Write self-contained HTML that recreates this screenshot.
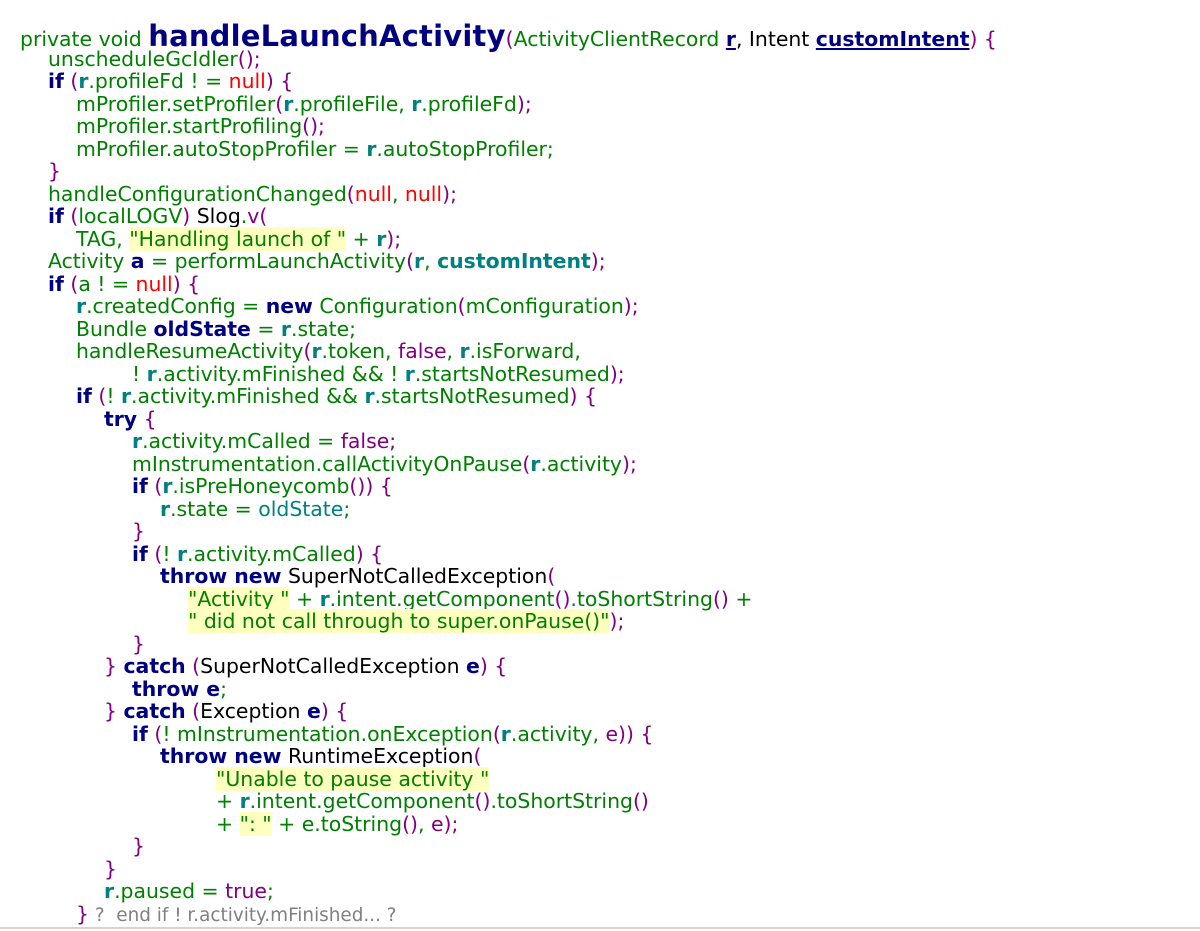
<!DOCTYPE html>
<html><head><meta charset="utf-8"><style>
body{margin:0;background:#fff;width:1200px;height:931px;overflow:hidden;position:relative;font-family:"DejaVu Sans","Liberation Sans",sans-serif;font-size:20.4px;color:#008000}
#c{position:absolute;top:25px;left:20px}
.l{height:22.5px;line-height:22.5px;white-space:pre}
.k{color:#000080;font-weight:bold}
.r{color:#008080;font-weight:bold}
.p{color:#800080}
.n{color:#ff0000}
.b{color:#000}
.s{background:#ffffc0;color:#008000}
.t{font-size:29px;font-weight:bold;color:#000080;letter-spacing:0.2px}
.u{text-decoration:underline}
.g{color:#808080}
#bot{position:absolute;left:0;top:927px;width:1200px;height:2px;background:#d8d4c8}
</style></head><body>
<div id="c">
<div class="l">private void <span class="t">handleLaunchActivity</span><span class="p">(</span>ActivityClientRecord <span class="k u">r</span><span class="b">, Intent </span><span class="k u">customIntent</span><span class="p">) {</span></div>
<div class="l" style="padding-left:28px">unscheduleGcIdler<span class="p">();</span></div>
<div class="l" style="padding-left:28px"><span class="k">if</span> <span class="p">(</span><span class="r">r</span>.profileFd ! = <span class="n">null</span><span class="p">) {</span></div>
<div class="l" style="padding-left:56px">mProfiler.setProfiler<span class="p">(</span><span class="r">r</span>.profileFile, <span class="r">r</span>.profileFd<span class="p">);</span></div>
<div class="l" style="padding-left:56px">mProfiler.startProfiling<span class="p">();</span></div>
<div class="l" style="padding-left:56px">mProfiler.autoStopProfiler = <span class="r">r</span>.autoStopProfiler;</div>
<div class="l p" style="padding-left:28px">}</div>
<div class="l" style="padding-left:28px">handleConfigurationChanged<span class="p">(</span><span class="n">null</span>, <span class="n">null</span><span class="p">);</span></div>
<div class="l" style="padding-left:28px"><span class="k">if</span> <span class="p">(</span>localLOGV<span class="p">)</span> <span class="b">Slog</span>.<span class="p">v(</span></div>
<div class="l" style="padding-left:56px">TAG, <span class="s">"Handling launch of "</span> + <span class="r">r</span><span class="p">);</span></div>
<div class="l" style="padding-left:28px">Activity <span class="k">a</span> = performLaunchActivity<span class="p">(</span><span class="r">r</span>, <span class="r">customIntent</span><span class="p">);</span></div>
<div class="l" style="padding-left:28px"><span class="k">if</span> <span class="p">(</span>a ! = <span class="n">null</span><span class="p">) {</span></div>
<div class="l" style="padding-left:56px"><span class="r">r</span>.createdConfig = <span class="k">new</span> Configuration<span class="p">(</span>mConfiguration<span class="p">);</span></div>
<div class="l" style="padding-left:56px">Bundle <span class="k">oldState</span> = <span class="r">r</span>.state;</div>
<div class="l" style="padding-left:56px">handleResumeActivity<span class="p">(</span><span class="r">r</span>.token, <span class="p">false</span>, <span class="r">r</span>.isForward,</div>
<div class="l" style="padding-left:112px">! <span class="r">r</span>.activity.mFinished &amp;&amp; ! <span class="r">r</span>.startsNotResumed<span class="p">);</span></div>
<div class="l" style="padding-left:56px"><span class="k">if</span> <span class="p">(</span>! <span class="r">r</span>.activity.mFinished &amp;&amp; <span class="r">r</span>.startsNotResumed<span class="p">) {</span></div>
<div class="l" style="padding-left:84px"><span class="k">try</span> <span class="p">{</span></div>
<div class="l" style="padding-left:112px"><span class="r">r</span>.activity.mCalled = <span class="p">false;</span></div>
<div class="l" style="padding-left:112px">mInstrumentation.callActivityOnPause<span class="p">(</span><span class="r">r</span>.activity<span class="p">);</span></div>
<div class="l" style="padding-left:112px"><span class="k">if</span> <span class="p">(</span><span class="r">r</span>.isPreHoneycomb<span class="p">()) {</span></div>
<div class="l" style="padding-left:140px"><span class="r">r</span>.state = <span style="color:#008080">oldState</span>;</div>
<div class="l p" style="padding-left:112px">}</div>
<div class="l" style="padding-left:112px"><span class="k">if</span> <span class="p">(</span>! <span class="r">r</span>.activity.mCalled<span class="p">) {</span></div>
<div class="l" style="padding-left:140px"><span class="k">throw new</span> <span class="b">SuperNotCalledException</span><span class="p">(</span></div>
<div class="l" style="padding-left:168px"><span class="s">"Activity "</span> + <span class="r">r</span>.intent.getComponent<span class="p">()</span>.toShortString<span class="p">()</span> +</div>
<div class="l" style="padding-left:168px"><span class="s">" did not call through to super.onPause()"</span><span class="p">);</span></div>
<div class="l p" style="padding-left:112px">}</div>
<div class="l" style="padding-left:84px"><span class="p">}</span> <span class="k">catch</span> <span class="p">(</span><span class="b">SuperNotCalledException</span> <span class="k">e</span><span class="p">) {</span></div>
<div class="l" style="padding-left:112px"><span class="k">throw e</span>;</div>
<div class="l" style="padding-left:84px"><span class="p">}</span> <span class="k">catch</span> <span class="p">(</span><span class="b">Exception</span> <span class="k">e</span><span class="p">) {</span></div>
<div class="l" style="padding-left:112px"><span class="k">if</span> <span class="p">(</span>! mInstrumentation.onException<span class="p">(</span><span class="r">r</span>.activity, <span class="p">e)) {</span></div>
<div class="l" style="padding-left:140px"><span class="k">throw new</span> <span class="b">RuntimeException</span><span class="p">(</span></div>
<div class="l" style="padding-left:196px"><span class="s">"Unable to pause activity "</span></div>
<div class="l" style="padding-left:196px">+ <span class="r">r</span>.intent.getComponent<span class="p">()</span>.toShortString<span class="p">()</span></div>
<div class="l" style="padding-left:196px">+ <span class="s">": "</span> + e.toString<span class="p">()</span>, <span class="p">e);</span></div>
<div class="l p" style="padding-left:112px">}</div>
<div class="l p" style="padding-left:84px">}</div>
<div class="l" style="padding-left:84px"><span class="r">r</span>.paused = <span class="p">true</span>;</div>
<div class="l" style="padding-left:56px"><span class="p">}</span><span class="g" style="font-size:18.4px"> ?  end if ! r.activity.mFinished... ?</span></div>
</div>
<div id="bot"></div>
</body></html>
